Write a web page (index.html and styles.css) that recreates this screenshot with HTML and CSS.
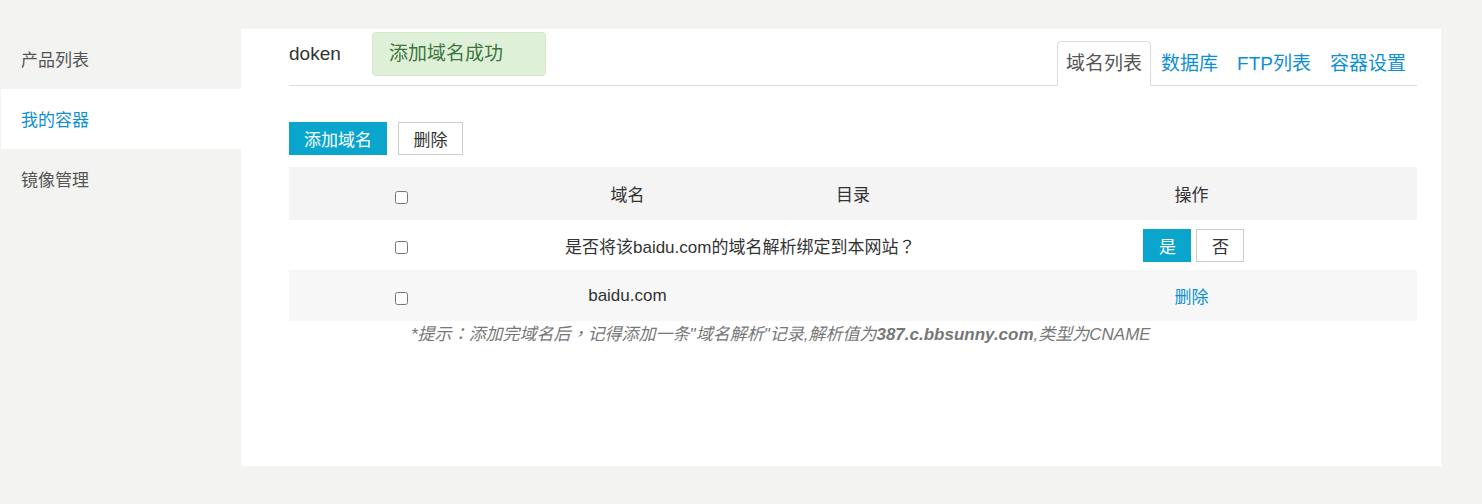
FILE: index.html
```html
<!DOCTYPE html>
<html lang="zh-CN">
<head>
<meta charset="utf-8">
<title>我的容器</title>
<link rel="stylesheet" href="styles.css">
</head>
<body>
<div class="layout">
  <nav class="sidebar">
    <a class="nav-item">产品列表</a>
    <a class="nav-item active">我的容器</a>
    <a class="nav-item">镜像管理</a>
  </nav>
  <main class="panel">
    <header class="panel-head">
      <div class="head-left">
        <span class="name">doken</span>
        <div class="alert">添加域名成功</div>
      </div>
      <ul class="tabs">
        <li class="tab active">域名列表</li>
        <li class="tab">数据库</li>
        <li class="tab">FTP列表</li>
        <li class="tab">容器设置</li>
      </ul>
    </header>
    <div class="toolbar">
      <button class="btn btn-primary">添加域名</button>
      <button class="btn btn-default">删除</button>
    </div>
    <table class="grid">
      <colgroup>
        <col class="c20"><col class="c20"><col class="c20"><col class="c40">
      </colgroup>
      <thead>
        <tr class="row-head">
          <th class="cb-cell cb-head"><input type="checkbox"></th>
          <th>域名</th>
          <th>目录</th>
          <th>操作</th>
        </tr>
      </thead>
      <tbody>
        <tr class="row-confirm">
          <td class="cb-cell"><input type="checkbox"></td>
          <td colspan="2">是否将该baidu.com的域名解析绑定到本网站<span class="fw" lang="zh-TW">？</span></td>
          <td>
            <div class="yn">
              <button class="btn btn-primary btn-sm">是</button>
              <button class="btn btn-default btn-sm">否</button>
            </div>
          </td>
        </tr>
        <tr class="row-item">
          <td class="cb-cell"><input type="checkbox"></td>
          <td>baidu.com</td>
          <td></td>
          <td><a class="link">删除</a></td>
        </tr>
      </tbody>
    </table>
    <p class="tip">*提示<span class="fw" lang="zh-TW">：</span>添加完域名后<span class="fw" lang="zh-TW">，</span>记得添加一条"域名解析"记录,解析值为<b>387.c.bbsunny.com</b>,类型为CNAME</p>
  </main>
</div>
</body>
</html>
```
FILE: styles.css
```css
* { box-sizing: border-box; }
html, body {
  margin: 0;
  padding: 0;
  background: #f3f3f1;
  font-family: "Liberation Sans", Arial, "Noto Sans CJK SC", sans-serif;
  font-size: 17px;
  color: #333;
  text-spacing-trim: space-all;
}
.layout {
  display: flex;
  align-items: flex-start;
  padding-top: 29px;
}
.sidebar {
  width: 241px;
  display: flex;
  flex-direction: column;
}
.nav-item {
  display: block;
  height: 60px;
  line-height: 56px;
  padding: 4px 0 0 20px;
  margin-left: 1px;
  color: #555;
  font-size: 17px;
}
.nav-item.active {
  background: #fff;
  color: #0e8fd3;
}
.panel {
  width: 1200px;
  height: 437px;
  background: #fff;
  padding: 0 24px 0 48px;
}
.panel-head {
  display: flex;
  justify-content: space-between;
  align-items: flex-end;
  height: 57px;
  border-bottom: 1px solid #ddd;
}
.head-left {
  align-self: flex-start;
  display: flex;
  align-items: center;
  height: 48px;
  padding-top: 2px;
}
.name {
  font-size: 19px;
  color: #333;
  width: 83px;
}
.alert {
  height: 44px;
  line-height: 42px;
  padding: 0 16px;
  width: 174px;
  background: #dff0d8;
  border: 1px solid #d6e9c6;
  border-radius: 4px;
  color: #3c763d;
  font-size: 19px;
  white-space: nowrap;
}
.tabs {
  list-style: none;
  margin: 0 2px -1px 0;
  padding: 0;
  display: flex;
}
.tab {
  height: 45px;
  line-height: 43px;
  padding: 0 8px;
  margin-left: 1px;
  font-size: 19px;
  color: #0e8fd3;
  border: 1px solid transparent;
  border-radius: 4px 4px 0 0;
}
.tab.active {
  color: #555;
  background: #fff;
  border-color: #ddd;
  border-bottom-color: #fff;
}
.toolbar {
  display: flex;
  gap: 11px;
  margin-top: 36px;
}
.btn {
  height: 33px;
  padding: 0 14px;
  font-family: inherit;
  font-size: 17px;
  border: 1px solid transparent;
  border-radius: 0;
  cursor: pointer;
}
.btn-primary {
  background: #0aa5cc;
  border-color: #0aa5cc;
  color: #fff;
}
.btn-default {
  background: #fff;
  border-color: #ccc;
  color: #333;
  padding: 0 14.5px;
}
.grid {
  width: 100%;
  margin-top: 12px;
  border-collapse: collapse;
  table-layout: fixed;
}
.c20 { width: 20%; }
.c40 { width: 40%; }
.grid th, .grid td {
  text-align: center;
  padding: 0;
  font-weight: normal;
  font-size: 17px;
  color: #333;
}
.grid .cb-cell { padding-top: 5px; }
.grid .cb-head { padding-top: 7px; }
.grid input[type="checkbox"] {
  display: block;
  margin: 0 auto;
  width: 13px;
  height: 13px;
}
.row-head { height: 53px; background: #f4f4f4; }
.row-confirm { height: 50px; background: #fff; }
.row-item { height: 51px; background: #f7f7f7; }
.fw {
  font-family: "Noto Sans CJK TC", "Noto Sans CJK SC", sans-serif;
}
.yn {
  display: flex;
  justify-content: center;
  gap: 5px;
  padding-left: 5px;
}
.btn-sm {
  width: 48px;
  padding: 0;
}
.link {
  color: #0e8fd3;
  cursor: pointer;
}
.tip {
  margin: 1px 0 0 0;
  padding-left: 122px;
  line-height: 22px;
  font-style: italic;
  color: #777;
  font-size: 17px;
}
.tip b { font-weight: bold; }
```
